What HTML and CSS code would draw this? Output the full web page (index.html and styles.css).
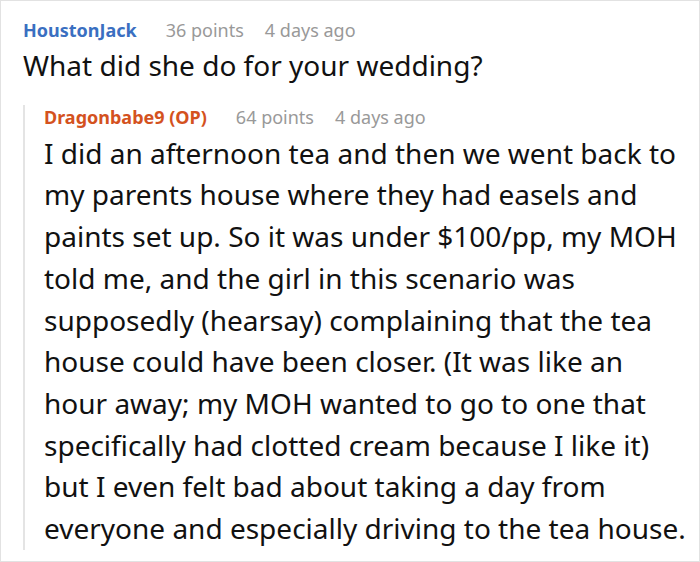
FILE: index.html
```html
<!DOCTYPE html>
<html>
<head>
<meta charset="utf-8">
<link rel="stylesheet" href="styles.css">
</head>
<body>
<div class="frame">
  <div class="comment">
    <div class="meta">
      <span class="user user-blue">HoustonJack</span>
      <span class="info">36 points</span>
      <span class="info">4 days ago</span>
    </div>
    <p class="text heading">What did she do for your wedding?</p>
    <div class="reply">
      <div class="meta reply-meta">
        <span class="user user-orange">Dragonbabe9 (OP)</span>
        <span class="info">64 points</span>
        <span class="info">4 days ago</span>
      </div>
      <p class="text body">I did an afternoon tea and then we went back to my parents house where they had easels and paints set up. So it was under $100/pp, my MOH told me, and the girl in this scenario was supposedly (hearsay) complaining that the tea house could have been closer. (It was like an hour away; my MOH wanted to go to one that specifically had clotted cream because I like it) but I even felt bad about taking a day from everyone and especially driving to the tea house.</p>
    </div>
  </div>
</div>
</body>
</html>
```

FILE: styles.css
```css
html, body {
  margin: 0;
  padding: 0;
  background: #fff;
}
.frame {
  width: 700px;
  height: 562px;
  box-sizing: border-box;
  border: 1px solid #e2e2e2;
  overflow: hidden;
  font-family: "Noto Sans", "Open Sans", sans-serif;
  color: #111;
}
.comment {
  padding: 17px 8px 0 22px;
}
.meta {
  display: flex;
  gap: 21px;
  font-size: 18px;
  line-height: 24px;
}
.user {
  font-weight: bold;
  margin-right: 8px;
}
.user-blue { color: #3a6fc1; }
.user-orange { color: #d4521e; }
.info { color: #999; }
.text {
  margin: 0;
  font-size: 28px;
  line-height: 41.7px;
}
.heading {
  margin-top: 3px;
}
.reply {
  margin-top: 29px;
  border-left: 2px solid #e4e4e4;
  padding-left: 19px;
}
.reply-meta {
  margin-top: -11px;
}
.body {
  margin-top: 4px;
  margin-bottom: -7px;
}
```
